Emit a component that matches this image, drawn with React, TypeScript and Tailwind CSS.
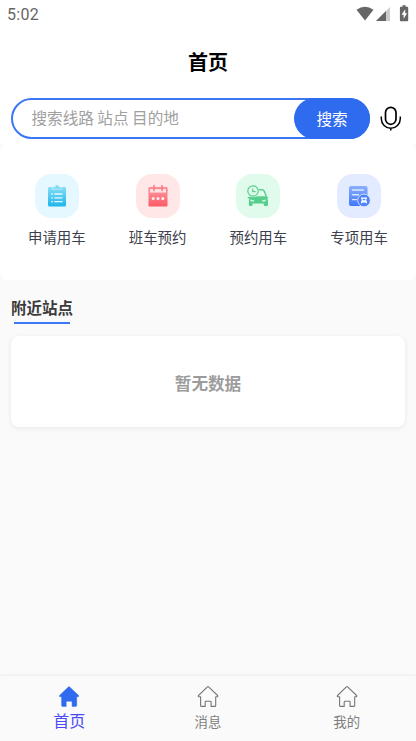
import type { ReactNode } from 'react';

interface MenuItem {
  label: string;
  tile: string;
  icon: ReactNode;
}

const menu: MenuItem[] = [
  { label: '申请用车', tile: 'bg-[#e6f8ff]', icon: <ClipboardIcon /> },
  { label: '班车预约', tile: 'bg-[#ffe7e8]', icon: <CalendarIcon /> },
  { label: '预约用车', tile: 'bg-[#e0fbec]', icon: <CarIcon /> },
  { label: '专项用车', tile: 'bg-[#e2ebff]', icon: <DocumentIcon /> },
];

const tabs = [
  { label: '首页', active: true },
  { label: '消息', active: false },
  { label: '我的', active: false },
];

function ClipboardIcon() {
  return (
    <svg width="20" height="22" viewBox="0 0 20 22">
      <defs>
        <linearGradient id="clip" x1="0" y1="0" x2="0" y2="1">
          <stop offset="0" stopColor="#84dcf7" />
          <stop offset="1" stopColor="#1fb6ea" />
        </linearGradient>
      </defs>
      <rect x="1" y="2" width="18" height="19.5" rx="1.5" fill="url(#clip)" />
      <path d="M5 1.9h3a2 2 0 0 1 4 0h3v2.4H5z" fill="#7edcf7" stroke="#d9f5fd" strokeWidth=".6" />
      <path d="M4.3 9h1.6M4.3 12.8h1.6M4.3 16.6h1.6M7.3 9h8.2M7.3 12.8h8.2M7.3 16.6h8.2" stroke="#e9faff" strokeWidth="1.3" />
    </svg>
  );
}

function CalendarIcon() {
  return (
    <svg width="20" height="22" viewBox="0 0 20 22">
      <defs>
        <linearGradient id="cal" x1="0" y1="0" x2="0" y2="1">
          <stop offset="0" stopColor="#fb8b94" />
          <stop offset="1" stopColor="#fb5967" />
        </linearGradient>
      </defs>
      <path d="M1.5 2h17q1 0 1 1v3.3H.5V3q0-1 1-1z" fill="#fb8d96" />
      <path d="M.5 7.5h19v13q0 1-1 1h-17q-1 0-1-1z" fill="url(#cal)" />
      <path d="M2 5.500h16" stroke="#ffe7e8" strokeWidth="2.600" />
      <path d="M1.2 4v4M18.800 4v4" stroke="#fb8790" strokeWidth="1.400" />
      <path d="M6 .6v5M14 .6v5" stroke="#fb7d88" strokeWidth="1.6" strokeLinecap="round" />
      <circle cx="5.2" cy="13.5" r="1.5" fill="#fff0f0" />
      <circle cx="10" cy="13.5" r="1.5" fill="#fff0f0" />
      <circle cx="14.8" cy="13.5" r="1.5" fill="#fff0f0" />
    </svg>
  );
}

function CarIcon() {
  return (
    <svg width="22" height="22" viewBox="0 0 22 22">
      <path d="M10.500 4.700h4.500q1.700 0 2.300 1.600l2 5" fill="none" stroke="#56cf8d" strokeWidth="1.5" />
      <path d="M.7 12.200q2.500-1.200 5-1h13.800l1.800 1-.3 1h-1q1 1 1 2.600V20q0 1-1 1h-2.300q-1 0-1-1v-1.500H5.500V20q0 1-1 1H2.900q-1 0-1-1v-4.200q0-1.600.7-2.400H.8z" fill="#56cf8d" />
      <path d="M3.600 14.600l3.600.9v1.100l-3.600-.4zM18.600 14.600l-3.600.9v1.100l3.600-.4z" fill="#e0fbec" />
      <circle cx="6" cy="6" r="6.200" fill="#e0fbec" />
      <circle cx="6" cy="6" r="5.200" fill="none" stroke="#56cf8d" strokeWidth="1.2" />
      <path d="M5.700 3.400v3.300h2.900" fill="none" stroke="#56cf8d" strokeWidth="1.200" />
    </svg>
  );
}

function DocumentIcon() {
  return (
    <svg width="22" height="22" viewBox="0 0 22 22">
      <defs>
        <linearGradient id="doc" x1="0" y1="0" x2="0" y2="1">
          <stop offset="0" stopColor="#8caeff" />
          <stop offset="1" stopColor="#3f78fa" />
        </linearGradient>
      </defs>
      <rect x="1" y="1" width="18.500" height="20" rx="2" fill="url(#doc)" />
      <path d="M4.500 5h11M4.500 9.800h6M4.500 14.600h4" stroke="#dce7ff" strokeWidth="1.400" strokeLinecap="round" />
      <circle cx="16" cy="15.400" r="6.300" fill="#4d82fb" stroke="#d7e3ff" strokeWidth=".9" />
      <path d="M13 12.600h6v1.200h-.6v2.600h.6v1.800h-1.300v-.7h-3.400v.7H13v-1.800h.6v-2.600H13z" fill="#fff" />
      <path d="M14.700 13.800h2.600v1.500h-2.600z" fill="#4d82fb" />
    </svg>
  );
}

function HomeIcon({ active }: { active: boolean }) {
  return (
    <svg width="22" height="22" viewBox="0 0 22 22" className="block">
      <path
        d="M10.400 .9q.6-.5 1.200 0l9 8.600q.6.900-.4 1.200h-1.500v8.700q0 1-1 1h-3.600V16q0-.8-.8-.8H9q-.8 0-.8.8v4.400H4.600q-1 0-1-1v-8.700H1.900q-1-.3-.4-1.200z"
        fill={active ? '#2f6bee' : 'none'}
        stroke={active ? '#2f6bee' : '#777'}
        strokeWidth={active ? 0.5 : 1.1}
        strokeLinejoin="round"
      />
    </svg>
  );
}

function StatusBar() {
  return (
    <div className="flex h-7 items-center justify-between px-[7px] pt-[2px] text-[#666]">
      <span className="font-[Roboto] text-[16px] leading-[26px] tracking-[0.3px]">5:02</span>
      <svg width="53" height="18" viewBox="0 0 53 18" className="-mt-[2px]">
        <path d="M.5 4.700q8.500-6 17 0L9 15.500z" fill="#666" />
        <path d="M34 2v14H20z" fill="#ccc" />
        <path d="M30 6v10H20z" fill="#666" />
        <path d="M44.800 1.800h1.700V.3h3.200v1.500h1.600q.9 0 .9.900v12.600q0 .9-.9.900h-6.500q-.9 0-.9-.9V2.700q0-.9.900-.9z" fill="#666" />
        <path d="M49.200 4.300l-3.700 5.500h2.100v4l3.500-5.600h-1.900z" fill="#fff" />
      </svg>
    </div>
  );
}

function MicIcon() {
  return (
    <svg width="22" height="26" viewBox="0 0 22 26" fill="none" stroke="#000">
      <rect x="5.500" y="1.300" width="10.500" height="17" rx="5.250" strokeWidth="1.700" />
      <path d="M1.300 10.500v2.200a9.500 9.500 0 0 0 19 0v-2.200M10.800 22v2.600" strokeWidth="1.500" />
    </svg>
  );
}

export default function App() {
  return (
    <div className="flex h-[741px] w-[416px] flex-col overflow-hidden bg-[#fafafa] font-['Noto_Sans_CJK_SC',sans-serif]">
      <header className="h-[144px] shrink-0 bg-white">
        <StatusBar />
        <h1 className="h-[70px] text-center text-[20px] font-bold leading-[67px] text-black">首页</h1>
        <div className="flex items-center pl-[11px]">
          <div className="flex h-[41px] w-[359px] items-center justify-between rounded-full border-2 border-[#3d76f4] bg-white">
            <span className="pb-1 pl-[18.500px] text-[15.600px] leading-6 text-[#a0a0a0]">搜索线路 站点 目的地</span>
            <button className="-my-[2px] -mr-[2px] h-[41px] w-[76px] shrink-0 rounded-full bg-[#2f6bee] text-[15.600px] text-white">
              搜索
            </button>
          </div>
          <div className="ml-[10px]">
            <MicIcon />
          </div>
        </div>
      </header>

      <section className="grid h-[136px] shrink-0 grid-cols-4 rounded-lg bg-white px-[6.500px] pt-[30px]">
        {menu.map(item => (
          <div key={item.label} className="flex flex-col items-center">
            <div className={`flex h-11 w-11 items-center justify-center rounded-[16px] ${item.tile}`}>{item.icon}</div>
            <span className="mt-[9px] text-[14.400px] leading-[20px] text-[#3c404c]">{item.label}</span>
          </div>
        ))}
      </section>

      <main className="flex-1 px-[11px] pt-[15px]">
        <h2 className="text-[15.500px] font-bold leading-[24px] text-[#3a3a3a]">附近站点</h2>
        <div className="ml-[3px] mt-[3px] h-[2px] w-[56px] bg-[#3f78f5]" />
        <div className="mt-[12px] flex h-[91px] items-center justify-center rounded-lg bg-white pt-1 text-[16.600px] font-bold text-[#9c9c9c] shadow-[0_1px_5px_rgba(0,0,0,0.08)]">
          暂无数据
        </div>
      </main>

      <nav className="grid h-[66px] shrink-0 grid-cols-3 border-t border-[#f0f0f0] shadow-[0_-1px_2px_rgba(0,0,0,0.03)]">
        {tabs.map(tab => (
          <div key={tab.label} className="flex flex-col items-center pt-[10px]">
            <HomeIcon active={tab.active} />
            <span className={tab.active ? 'text-[16px] leading-[24px] text-[#4a4af5]' : 'pt-px text-[13.400px] leading-[24px] text-[#808080]'}>
              {tab.label}
            </span>
          </div>
        ))}
      </nav>
    </div>
  );
}
